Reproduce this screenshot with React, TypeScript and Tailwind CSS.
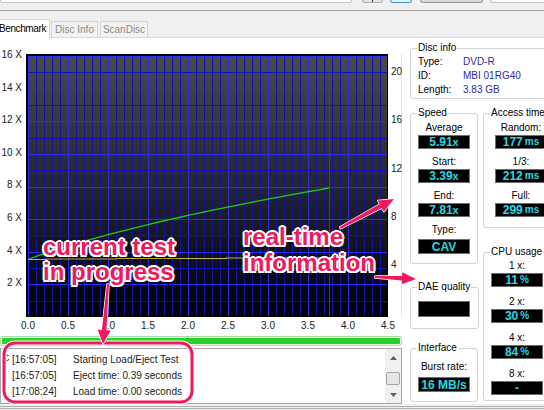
import React from "react";

const leftTicks = ["16 X", "14 X", "12 X", "10 X", "8 X", "6 X", "4 X", "2 X"];
const rightTicks = ["20", "16", "12", "8", "4"];
const xTicks = ["0.0", "0.5", "1.0", "1.5", "2.0", "2.5", "3.0", "3.5", "4.0", "4.5"];

const logLines = [
  ["[16:57:05]", "Starting Load/Eject Test"],
  ["[16:57:05]", "Eject time: 0.39 seconds"],
  ["[17:08:24]", "Load time: 0.00 seconds"],
];

// plot area inside the svg: x 2..362, y 2..263
const GX = 2;
const GY = 2;
const UNIT_Y = 261 / 16;

function greenCurve() {
  const pts: string[] = [];
  const a = 0.3;
  const norm = Math.sqrt(a + 1) - Math.sqrt(a);
  for (let i = 0; i <= 30; i++) {
    const t = i / 30;
    const x = 3 + t * 300;
    const y = 205 - 71 * ((Math.sqrt(a + t) - Math.sqrt(a)) / norm);
    pts.push(`${x.toFixed(1)},${y.toFixed(1)}`);
  }
  return pts.join(" ");
}

function ChartSvg() {
  const vLines = Array.from({ length: 46 }, (_, i) => i);
  const hLines = Array.from({ length: 17 }, (_, i) => i);
  return (
    <svg width="362" height="263" viewBox="0 0 362 263" className="block">
      <defs>
        <linearGradient id="bg" x1="0" y1="0" x2="0" y2="1">
          <stop offset="0" stopColor="#4a4a4a" />
          <stop offset="0.5" stopColor="#262626" />
          <stop offset="1" stopColor="#000000" />
        </linearGradient>
      </defs>
      <rect x="0" y="0" width="362" height="263" fill="#000" />
      <rect x={GX} y={GY} width="360" height="261" fill="url(#bg)" />
      {vLines.map((i) => (
        <line
          key={`v${i}`}
          x1={GX + i * 8 + 0.5}
          x2={GX + i * 8 + 0.5}
          y1={GY}
          y2={263}
          stroke={i % 5 === 0 ? "#2a2aff" : "#1010b8"}
          strokeWidth="1"
        />
      ))}
      {hLines.map((j) => {
        const y = Math.round(GY + j * UNIT_Y) + 0.5;
        return (
          <line
            key={`h${j}`}
            x1={GX}
            x2={362}
            y1={y}
            y2={y}
            stroke={j % 2 === 0 ? "#2a2aff" : "#1010b8"}
            strokeWidth="1"
          />
        );
      })}
      <line x1="303.5" x2="303.5" y1={GY} y2="263" stroke="#b8141c" strokeWidth="1" />
      <polyline
        points="2,205.5 20,205.5 20,205 90,205 90,204.5 200,204.5 200,204 303,204"
        fill="none"
        stroke="#c2b829"
        strokeWidth="1.2"
      />
      <polyline points={greenCurve()} fill="none" stroke="#21c821" strokeWidth="1.3" />
      <rect x="0.5" y="0.5" width="361" height="262" fill="none" stroke="#000" strokeWidth="1" />
      <line x1="0" x2="362" y1="1" y2="1" stroke="#000" strokeWidth="2" />
    </svg>
  );
}

function Toolbar() {
  return (
    <div className="flex h-[11px] shrink-0 items-start border-b border-[#a0a0a0]">
      <div className="h-[3px] w-[352px] shrink-0 rounded-b-[3px] border-x border-b border-[#c4c4c4] bg-white" />
      <div className="ml-[10px] flex h-[3px] w-[21px] shrink-0 justify-center rounded-b-[3px] border-x border-b border-[#adadad] bg-[#e5e5e5]">
        <div className="h-[2px] w-px bg-[#333]" />
      </div>
      <div className="ml-[7px] h-[3px] w-[22px] shrink-0 rounded-b-[3px] border-x border-b border-[#3b99e0] bg-[#e5f1fb]" />
      <div className="ml-[8px] h-[3px] w-[63px] shrink-0 rounded-b-[3px] border-x border-b border-[#9a9a9a] bg-[#d9d9d9]" />
      <div className="ml-[7px] h-[3px] flex-1 rounded-bl-[3px] border-b border-l border-[#c4c4c4] bg-white" />
    </div>
  );
}

function Tabs() {
  return (
    <div className="flex h-[26px] shrink-0 items-end">
      <div className="relative z-10 -mb-px -ml-[12px] flex h-[19px] w-[62px] shrink-0 items-center justify-end border-x border-t border-[#d9d9d9] bg-white pr-[3px] leading-none tracking-[-0.4px]">
        Benchmark
      </div>
      <div className="ml-px flex h-[16px] w-[47px] shrink-0 items-center justify-center border-x border-t border-[#d5d5d5] bg-[#f3f3f3] leading-none text-[#8a8a8a]">
        Disc Info
      </div>
      <div className="ml-[2px] flex h-[16px] w-[48px] shrink-0 items-center justify-center border-x border-t border-[#d5d5d5] bg-[#f3f3f3] leading-none text-[#8a8a8a]">
        ScanDisc
      </div>
    </div>
  );
}

function LeftPane() {
  return (
    <div className="flex w-[402px] shrink-0 flex-col">
      <div className="mt-[16px] flex h-[263px]">
        <div className="relative w-[26px] shrink-0">
          {leftTicks.map((t, i) => (
            <div
              key={t}
              className="absolute right-[4px] leading-[12px] text-[#222]"
              style={{ top: -5 + i * 32.6 }}
            >
              {t}
            </div>
          ))}
        </div>
        <ChartSvg />
        <div className="relative w-[14px] shrink-0 border-r border-[#e4e4e4]">
          {rightTicks.map((t, i) => (
            <div
              key={t}
              className="absolute left-[3px] leading-[12px] text-[#222]"
              style={{ top: 12 + i * 48.3 }}
            >
              {t}
            </div>
          ))}
        </div>
      </div>
      <div className="relative h-[16px]">
        {xTicks.map((t, i) => (
          <div
            key={t}
            className="absolute top-[3px] w-[20px] text-center leading-[12px] text-[#222]"
            style={{ left: 18 + i * 40 }}
          >
            {t}
          </div>
        ))}
      </div>
      <div className="mt-[3px] h-[10px] rounded-[2px] border border-[#a9dfa9] bg-[#e6f7e6] p-px">
        <div className="h-full rounded-[1px] bg-[#2bd02b]" />
      </div>
      <div className="mt-[2px] flex h-[56px] border border-[#a8a8a8] bg-white">
        <div className="relative flex-1 pl-[11px] pt-[2px]">
          <svg width="8" height="8" viewBox="0 0 8 8" className="absolute left-[1px] top-[5px]">
            <path d="M6.5 2.2 A3 3 0 1 0 6.8 5" fill="none" stroke="#555" strokeWidth="1.2" />
          </svg>
          {logLines.map(([ts, msg], i) => (
            <div key={i} className="flex h-[16px] items-center text-[#1a1a1a]">
              <span className="w-[61px] shrink-0">{ts}</span>
              <span>{msg}</span>
            </div>
          ))}
        </div>
        <div className="flex w-[16px] shrink-0 flex-col bg-[#f0f0f0]">
          <div className="flex h-[17px] items-center justify-center">
            <svg width="7" height="4" viewBox="0 0 7 4">
              <path d="M0 4 L3.5 0 L7 4 Z" fill="#606060" />
            </svg>
          </div>
          <div className="flex-1 px-[1px] pt-[6px]">
            <div className="h-[13px] rounded-[2px] border border-[#a6a6a6] bg-[#e6e6e6]" />
          </div>
          <div className="flex h-[17px] items-center justify-center">
            <svg width="7" height="4" viewBox="0 0 7 4">
              <path d="M0 0 L3.5 4 L7 0 Z" fill="#606060" />
            </svg>
          </div>
        </div>
      </div>
    </div>
  );
}

function Group({
  title,
  className,
  children,
}: {
  title: string;
  className: string;
  children?: React.ReactNode;
}) {
  return (
    <fieldset className={`shrink-0 rounded-[3px] border border-[#d3d3d3] px-[7px] ${className}`}>
      <legend className="-ml-px whitespace-nowrap px-px leading-[12px]">{title}</legend>
      {children}
    </fieldset>
  );
}

function Val({ children, className = "" }: { children?: React.ReactNode; className?: string }) {
  return (
    <div
      className={`flex w-[52px] items-center justify-center border border-[#6e6e6e] bg-black text-[12px] font-bold leading-none text-[#27d7e3] ${className}`}
    >
      {children}
    </div>
  );
}

function Item({ label, children }: { label: string; children?: React.ReactNode }) {
  return (
    <div className="flex flex-col items-center">
      <div className="leading-[12px]">{label}</div>
      <Val className="mt-px h-[14px]">{children}</Val>
    </div>
  );
}

function Unit({ children }: { children: React.ReactNode }) {
  return <span className="ml-[2px] text-[10px]">{children}</span>;
}

function RightPane() {
  return (
    <div className="flex-1 pl-[8px] pt-[4px]">
      <Group title="Disc info" className="h-[57px] w-[141px]">
        <div className="pt-[1px]">
          {[
            ["Type:", "DVD-R"],
            ["ID:", "MBI 01RG40"],
            ["Length:", "3.83 GB"],
          ].map(([k, v]) => (
            <div key={k} className="flex leading-[14px]">
              <span className="w-[45px] shrink-0">{k}</span>
              <span className="text-[#2a2aa6]">{v}</span>
            </div>
          ))}
        </div>
      </Group>
      <div className="mt-[8px] flex gap-[5px]">
        <div className="flex w-[68px] shrink-0 flex-col">
          <Group title="Speed" className="h-[157px] w-[68px]">
            <div className="flex flex-col items-center gap-[7px] pt-[3px]">
              <Item label="Average">
                5.91<span className="text-[11px]">x</span>
              </Item>
              <Item label="Start:">
                3.39<span className="text-[11px]">x</span>
              </Item>
              <Item label="End:">
                7.81<span className="text-[11px]">x</span>
              </Item>
              <div className="flex flex-col items-center">
                <div className="leading-[12px]">Type:</div>
                <Val className="mt-[3px] h-[15px]">CAV</Val>
              </div>
            </div>
          </Group>
          <Group title="DAE quality" className="mt-[17px] h-[48px] w-[68px]">
            <Val className="mt-[8px] h-[16px]" />
          </Group>
          <Group title="Interface" className="mt-[13px] h-[60px] w-[68px]">
            <div className="flex flex-col items-center pt-[7px]">
              <div className="leading-[12px]">Burst rate:</div>
              <Val className="mt-[4px] h-[15px]">16 MB/s</Val>
            </div>
          </Group>
        </div>
        <div className="flex w-[68px] shrink-0 flex-col">
          <Group title="Access times" className="h-[121px] w-[68px]">
            <div className="flex flex-col items-center gap-[7px] pt-[3px]">
              <Item label="Random:">
                177<Unit>ms</Unit>
              </Item>
              <Item label="1/3:">
                212<Unit>ms</Unit>
              </Item>
              <Item label="Full:">
                299<Unit>ms</Unit>
              </Item>
            </div>
          </Group>
          <Group title="CPU usage" className="mt-[18px] h-[155px] w-[68px]">
            <div className="flex flex-col items-center gap-[9px] pt-[2px]">
              <Item label="1 x:">
                11<Unit>%</Unit>
              </Item>
              <Item label="2 x:">
                30<Unit>%</Unit>
              </Item>
              <Item label="4 x:">
                84<Unit>%</Unit>
              </Item>
              <Item label="8 x:">-</Item>
            </div>
          </Group>
        </div>
      </div>
    </div>
  );
}

function arrowPoints(
  x1: number,
  y1: number,
  x2: number,
  y2: number,
  w0 = 2,
  w1 = 4.5,
  hl = 14,
  hw = 13
) {
  const dx = x2 - x1;
  const dy = y2 - y1;
  const L = Math.hypot(dx, dy);
  const ux = dx / L;
  const uy = dy / L;
  const nx = -uy;
  const ny = ux;
  const bx = x2 - ux * hl;
  const by = y2 - uy * hl;
  const p = (x: number, y: number) => `${x.toFixed(1)},${y.toFixed(1)}`;
  return [
    p(x1 + (nx * w0) / 2, y1 + (ny * w0) / 2),
    p(bx + (nx * w1) / 2, by + (ny * w1) / 2),
    p(bx + (nx * hw) / 2, by + (ny * hw) / 2),
    p(x2, y2),
    p(bx - (nx * hw) / 2, by - (ny * hw) / 2),
    p(bx - (nx * w1) / 2, by - (ny * w1) / 2),
    p(x1 - (nx * w0) / 2, y1 - (ny * w0) / 2),
  ].join(" ");
}

const PINK = "#ef195d";

function Annotations() {
  const callout =
    "absolute whitespace-nowrap text-[24px] font-bold text-[#ef195d] [text-shadow:-2px_0_0_#fff,2px_0_0_#fff,0_-2px_0_#fff,0_2px_0_#fff,-1.5px_-1.5px_0_#fff,1.5px_-1.5px_0_#fff,-1.5px_1.5px_0_#fff,1.5px_1.5px_0_#fff,2px_3px_3px_rgba(0,0,0,0.55)]";
  return (
    <div className="pointer-events-none absolute inset-0">
      <svg width="544" height="410" className="absolute left-0 top-0">
        <rect x="4" y="343" width="188" height="59" rx="11" fill="none" stroke="#fff" strokeWidth="5" />
        <rect x="4" y="343" width="188" height="59" rx="11" fill="none" stroke={PINK} strokeWidth="3" />
        {[
          arrowPoints(108, 284, 103, 344),
          arrowPoints(340, 228, 394, 199, 2, 4.5, 15, 13),
          arrowPoints(375, 277, 416, 279, 2, 4.5, 14, 12),
        ].map((pts, i) => (
          <polygon
            key={i}
            points={pts}
            fill={PINK}
            stroke="#fff"
            strokeWidth="1.5"
            strokeLinejoin="round"
            paintOrder="stroke"
          />
        ))}
      </svg>
      <div className={`${callout} left-[43px] top-[234px] leading-[25px]`}>
        current test
        <br />
        in progress
      </div>
      <div className={`${callout} left-[243px] top-[224px] leading-[26px]`}>
        real-time
        <br />
        information
      </div>
    </div>
  );
}

export default function App() {
  return (
    <div className="relative flex h-[410px] w-[544px] flex-col overflow-hidden bg-[#f0f0f0] font-['Liberation_Sans',Arial,sans-serif] text-[10px] text-black">
      <Toolbar />
      <Tabs />
      <div className="flex h-[367px] shrink-0 overflow-hidden border-t border-[#d9d9d9] bg-white">
        <LeftPane />
        <RightPane />
      </div>
      <div className="flex-1 pt-[2px]">
        <div className="h-[3px] border-y border-[#b0b0b0]" />
      </div>
      <Annotations />
    </div>
  );
}
